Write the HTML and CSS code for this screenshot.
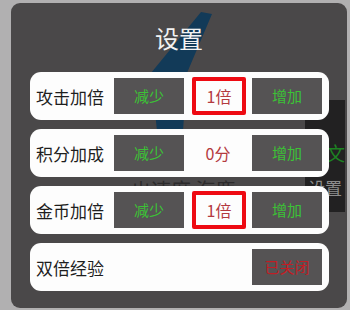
FILE: index.html
```html
<!DOCTYPE html>
<html lang="zh">
<head>
<meta charset="utf-8">
<link rel="stylesheet" href="styles.css">
</head>
<body>
<div class="screen">
  <div class="panel">
    <svg class="decor-blade" width="335" height="305" viewBox="0 0 335 305">
      <polygon points="190,9 201,11 176,70 172,128 146,128 140,70" fill="#123a58"/>
    </svg>
    <div class="decor-box">
      <span class="decor-wen">文</span>
      <span class="decor-set">设置</span>
    </div>
    <div class="decor-text"><span>ㄓ速度 海鹿</span></div>
    <div class="title">设置</div>
    <div class="rows">
      <div class="row">
        <span class="label">攻击加倍</span>
        <button class="btn green">减少</button>
        <span class="value"><span class="boxed">1倍</span></span>
        <button class="btn green">增加</button>
      </div>
      <div class="row">
        <span class="label">积分加成</span>
        <button class="btn green">减少</button>
        <span class="value"><span class="plain">0分</span></span>
        <button class="btn green">增加</button>
      </div>
      <div class="row">
        <span class="label">金币加倍</span>
        <button class="btn green">减少</button>
        <span class="value"><span class="boxed">1倍</span></span>
        <button class="btn green">增加</button>
      </div>
      <div class="row">
        <span class="label">双倍经验</span>
        <span class="spacer"></span>
        <button class="btn red">已关闭</button>
      </div>
    </div>
  </div>
</div>
</body>
</html>
```
FILE: styles.css
```css
* { box-sizing: border-box; }
html, body {
  margin: 0;
  padding: 0;
  background: #b1b0b1;
  font-family: "Noto Sans CJK SC", "Noto Sans", sans-serif;
}
.screen {
  width: 350px;
  height: 310px;
  padding: 3px 3px 2px 11px;
}
.panel {
  position: relative;
  width: 336px;
  height: 305px;
  background: #4a4849;
  border-radius: 9px;
  overflow: hidden;
}
.decor-blade {
  position: absolute;
  left: 0;
  top: 0;
  z-index: 0;
}
.decor-box {
  position: absolute;
  left: 294px;
  top: 97px;
  width: 40px;
  height: 112px;
  background: #222122;
  z-index: 0;
}
.decor-wen {
  position: absolute;
  left: 21px;
  top: 42px;
  font-size: 19px;
  line-height: 22px;
  color: #1d8222;
}
.decor-set {
  position: absolute;
  left: 3px;
  top: 78px;
  font-size: 17px;
  line-height: 20px;
  color: #8c8c8c;
  white-space: nowrap;
}
.decor-text {
  position: absolute;
  left: 120px;
  top: 176px;
  width: 130px;
  height: 7px;
  overflow: hidden;
  z-index: 0;
}
.decor-text span {
  display: block;
  margin-top: 1px;
  font-size: 20px;
  line-height: 20px;
  color: #2c2b2c;
  white-space: nowrap;
}
.title {
  position: relative;
  z-index: 1;
  height: 69px;
  line-height: 70px;
  text-align: center;
  font-size: 24px;
  color: #f2f2f2;
}
.rows {
  position: relative;
  z-index: 1;
  display: flex;
  flex-direction: column;
  gap: 9px;
  padding: 0 18px 0 19px;
}
.row {
  height: 48px;
  background: #fdfdfd;
  border-radius: 11px;
  display: flex;
  align-items: center;
  padding: 0 7px 0 6px;
}
.label {
  width: 78px;
  font-size: 17px;
  color: #1e1e1e;
  white-space: nowrap;
}
.btn {
  width: 70px;
  height: 36px;
  border: none;
  margin: 0;
  padding: 0;
  background: #555354;
  font-family: inherit;
  font-size: 15px;
  line-height: 36px;
}
.btn.green { color: #3cc236; }
.btn.red { color: #c21d24; }
.spacer { flex: 1; }
.value {
  flex: 1;
  display: flex;
  justify-content: center;
  align-items: center;
  font-size: 16px;
  color: #b43a3f;
}
.boxed {
  width: 54px;
  height: 38px;
  border: 4px solid #ee0a12;
  border-radius: 2px;
  display: flex;
  justify-content: center;
  align-items: center;
  margin-left: 2px;
}
.plain {
  line-height: 36px;
}
```
